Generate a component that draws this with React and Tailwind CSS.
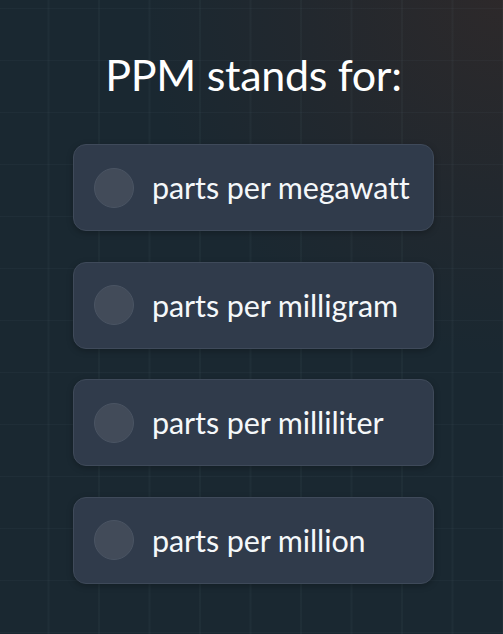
const options = [
  "parts per megawatt",
  "parts per milligram",
  "parts per milliliter",
  "parts per million",
];

function OptionCard({ label }) {
  return (
    <button
      type="button"
      className="flex h-[87px] w-[361px] items-center gap-[18px] rounded-[13px] border border-[#3f4a5a] bg-[#303b4b] pl-[20px] text-left shadow-[0_2px_6px_rgba(0,0,0,0.25)]"
    >
      <span className="h-[40px] w-[40px] shrink-0 rounded-full border border-[#4a5463] bg-[#424b59]" />
      <span className="text-[30.5px] leading-none tracking-[-0.1px] text-[#f5f8fa]">{label}</span>
    </button>
  );
}

export default function App() {
  return (
    <div
      className="relative h-[634px] w-[503px] overflow-hidden bg-[#1a2831]"
      style={{ fontFamily: "Lato, 'Open Sans', sans-serif" }}
    >
      {/* muted warm tint toward the top-right corner */}
      <div className="pointer-events-none absolute inset-0 bg-[radial-gradient(ellipse_90%_70%_at_100%_0%,rgba(46,41,42,0.95),rgba(40,40,44,0.55)_45%,transparent_80%)]" />
      {/* faint grid */}
      <div className="pointer-events-none absolute inset-0 bg-[linear-gradient(to_right,rgba(120,150,160,0.055)_1.5px,transparent_1.5px),linear-gradient(to_bottom,rgba(120,150,160,0.05)_1.5px,transparent_1.5px)] bg-[size:50.5px_52px] bg-[position:-3px_8px]" />

      <div className="relative flex flex-col items-center">
        <h1 className="mt-[49px] ml-[4px] text-[43px] leading-[52px] tracking-[-0.3px] text-white">
          PPM stands for:
        </h1>
        <div className="mt-[43px] ml-[4px] flex flex-col gap-[30.5px]">
          {options.map((label) => (
            <OptionCard key={label} label={label} />
          ))}
        </div>
      </div>
    </div>
  );
}
